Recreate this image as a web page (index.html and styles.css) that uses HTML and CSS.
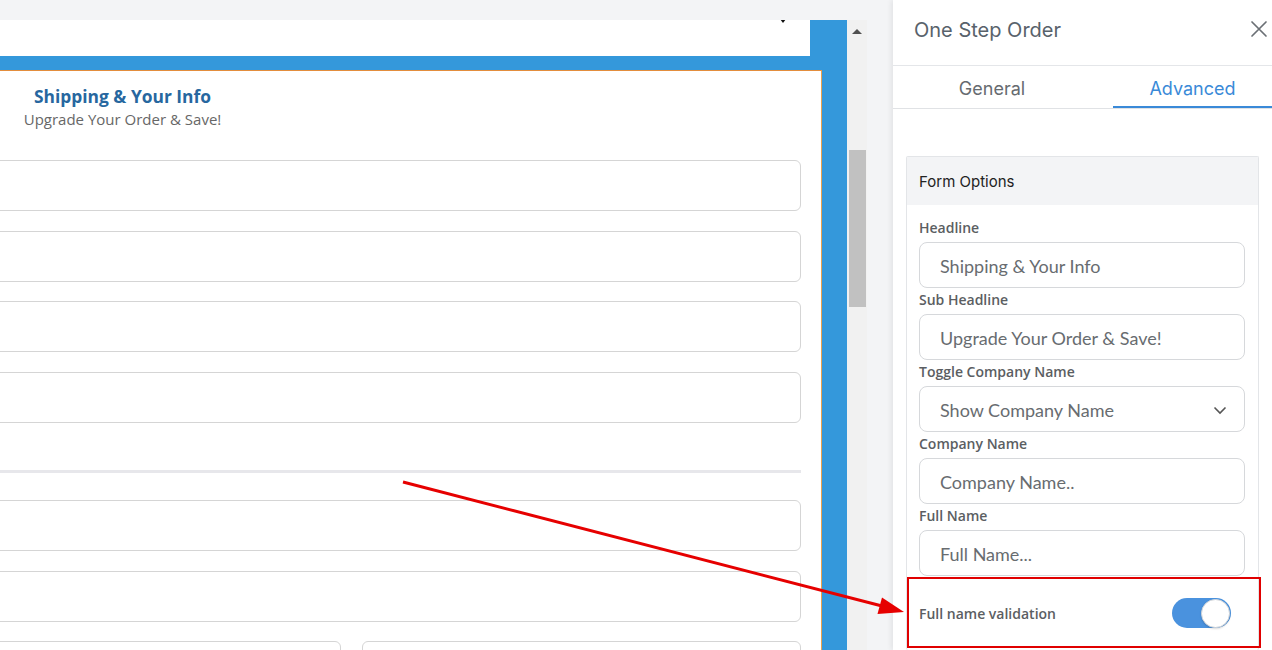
FILE: index.html
```html
<!DOCTYPE html>
<html lang="en">
<head>
<meta charset="utf-8">
<title>One Step Order</title>
<link rel="stylesheet" href="styles.css">
</head>
<body>
<div class="app">
  <main class="canvas">
    <div class="editor">
      <div class="select-top"><span class="caret"></span></div>
      <div class="form-card">
        <div class="form-head">
          <div class="fh-title">Shipping &amp; Your Info</div>
          <div class="fh-sub">Upgrade Your Order &amp; Save!</div>
        </div>
        <div class="fields">
          <div class="box"></div>
          <div class="box"></div>
          <div class="box"></div>
          <div class="box"></div>
        </div>
        <div class="divider"></div>
        <div class="fields fields-b">
          <div class="box"></div>
          <div class="box"></div>
          <div class="half-row">
            <div class="box"></div>
            <div class="box"></div>
          </div>
        </div>
      </div>
    </div>
    <div class="scrollbar">
      <span class="sb-up"></span>
      <div class="sb-thumb"></div>
    </div>
  </main>

  <aside class="panel">
    <header class="panel-head">
      <h1 class="panel-title">One Step Order</h1>
      <svg class="close" width="18" height="18" viewBox="0 0 18 18"><path d="M2 2L16 16M16 2L2 16" stroke="#6b7075" stroke-width="1.7" fill="none" stroke-linecap="round"/></svg>
    </header>
    <nav class="tabs">
      <div class="tab">General</div>
      <div class="tab active">Advanced</div>
    </nav>
    <div class="panel-body">
      <section class="opt-card">
        <div class="opt-head">Form Options</div>
        <div class="opt-body">
          <label class="lbl">Headline</label>
          <div class="inp">Shipping &amp; Your Info</div>
          <label class="lbl">Sub Headline</label>
          <div class="inp">Upgrade Your Order &amp; Save!</div>
          <label class="lbl">Toggle Company Name</label>
          <div class="inp sel">Show Company Name
            <svg class="chev" width="14" height="9" viewBox="0 0 14 9"><path d="M1.5 1.5L7 7L12.5 1.5" stroke="#555" stroke-width="1.6" fill="none"/></svg>
          </div>
          <label class="lbl">Company Name</label>
          <div class="inp">Company Name..</div>
          <label class="lbl">Full Name</label>
          <div class="inp">Full Name...</div>
          <div class="toggle-row">
            <span class="lbl">Full name validation</span>
            <span class="switch"><span class="knob"></span></span>
          </div>
        </div>
      </section>
    </div>
  </aside>
</div>

<svg class="annot" width="1272" height="650" viewBox="0 0 1272 650">
  <line x1="403" y1="482" x2="882" y2="606" stroke="#e60000" stroke-width="3"/>
  <polygon points="904,612 877.5,614 882,597.5" fill="#e60000"/>
  <rect x="908" y="578" width="352" height="69" fill="none" stroke="#e00000" stroke-width="2"/>
</svg>
</body>
</html>
```

FILE: styles.css
```css
* { box-sizing: border-box; }

html, body {
  margin: 0;
  padding: 0;
}

body {
  width: 1272px;
  height: 650px;
  overflow: hidden;
  background: #f3f4f6;
  font-family: "Open Sans", "Liberation Sans", sans-serif;
  position: relative;
}

.app {
  display: flex;
  height: 650px;
}

/* ---------- left canvas ---------- */
.canvas {
  display: flex;
  width: 867px;
  flex: none;
}

.editor {
  width: 847px;
  height: 630px;
  margin-top: 20px;
  background: #3498db;
  overflow: hidden;
}

.select-top {
  position: relative;
  width: 810px;
  height: 36px;
  background: #fff;
}

.caret {
  position: absolute;
  left: 780px;
  top: -1px;
  width: 0;
  height: 0;
  border-left: 3.5px solid transparent;
  border-right: 3.5px solid transparent;
  border-top: 4px solid #111;
}

.form-card {
  width: 822px;
  height: 600px;
  margin-top: 14px;
  background: #fff;
  border-top: 1px solid #e38d3d;
  border-right: 1px solid #eaa24f;
  overflow: hidden;
}

.form-head {
  width: 245px;
  padding-top: 13px;
  text-align: center;
}

.fh-title {
  font-size: 17.4px;
  line-height: 24px;
  font-weight: 700;
  color: #27679f;
}

.fh-sub {
  font-size: 15px;
  line-height: 22px;
  color: #676767;
}

.fields {
  display: flex;
  flex-direction: column;
  gap: 19.67px;
  margin-top: 30px;
  margin-left: -30px;
  width: 831px;
}

.fields-b {
  margin-top: 27px;
}

.box {
  height: 51px;
  border: 1px solid #d5d5d5;
  border-radius: 6px;
  background: #fff;
}

.divider {
  width: 801px;
  height: 3px;
  margin-top: 47px;
  background: #e7e7eb;
}

.half-row {
  display: grid;
  grid-template-columns: 371px 1fr;
  gap: 21px;
}

.scrollbar {
  width: 20px;
  height: 630px;
  margin-top: 20px;
  background: #f1f1f1;
  display: flex;
  flex-direction: column;
  align-items: center;
  padding-top: 9px;
}

.sb-up {
  width: 0;
  height: 0;
  border-left: 5px solid transparent;
  border-right: 5px solid transparent;
  border-bottom: 5px solid #505050;
}

.sb-thumb {
  width: 17px;
  height: 157px;
  margin-top: 116px;
  margin-left: 1px;
  background: #c1c1c1;
}

/* ---------- right panel ---------- */
.panel {
  width: 379px;
  margin-left: 26px;
  height: 650px;
  background: #fff;
  box-shadow: -2px 0 5px rgba(0, 0, 0, 0.07);
  overflow: hidden;
  font-family: Inter, "Noto Sans", sans-serif;
}

.panel-head {
  height: 66px;
  border-bottom: 1px solid #e4e6e9;
  display: flex;
  justify-content: space-between;
  align-items: flex-start;
  padding: 16px 4px 0 21px;
}

.panel-title {
  margin: 0;
  font-size: 20px;
  line-height: 28px;
  font-weight: 400;
  color: #58626b;
}

.close {
  margin-top: 4px;
}

.tabs {
  display: flex;
  height: 43px;
  border-bottom: 1px solid #e0e2e5;
}

.tab {
  height: 42px;
  padding-top: 11px;
  font-size: 18px;
  line-height: 24px;
  text-align: center;
  color: #666b70;
}

.tab:first-child {
  width: 198px;
  margin-right: 22px;
}

.tab.active {
  flex: 1;
  color: #3a8ad8;
  box-shadow: inset 0 -2px 0 #3a8ad8;
}

.panel-body {
  padding: 47px 13px 0 13px;
}

.opt-card {
  border: 1px solid #e3e5e8;
  border-bottom: none;
  border-radius: 2px;
}

.opt-head {
  height: 48px;
  background: #f3f4f6;
  padding: 1px 0 0 12px;
  font-size: 15px;
  line-height: 48px;
  color: #222;
}

.opt-body {
  padding: 11px 13px 0 12px;
  display: flex;
  flex-direction: column;
}

.lbl {
  display: block;
  font-family: "Open Sans", "Liberation Sans", sans-serif;
  font-size: 14px;
  font-weight: 600;
  line-height: 22px;
  padding-top: 1px;
  height: 22px;
  color: #5b5e62;
  margin-bottom: 4px;
}

.inp {
  height: 46px;
  border: 1px solid #d6d8db;
  border-radius: 8px;
  padding: 2px 0 0 20px;
  display: flex;
  align-items: center;
  font-family: Lato, "Liberation Sans", sans-serif;
  font-size: 18px;
  color: #686c70;
}

.sel {
  justify-content: space-between;
  padding-right: 17px;
}

.chev {
  flex: none;
}

.toggle-row {
  height: 74px;
  display: flex;
  align-items: center;
  justify-content: space-between;
  padding-right: 14px;
}

.toggle-row .lbl {
  margin-bottom: 0;
}

.switch {
  position: relative;
  width: 59px;
  height: 30px;
  border-radius: 15px;
  background: #4a92de;
  display: flex;
  justify-content: flex-end;
  align-items: center;
  padding-right: 1px;
}

.knob {
  width: 29px;
  height: 29px;
  border-radius: 50%;
  background: #fff;
  border: 1px solid #d3d6da;
  box-shadow: 0 1px 2px rgba(0, 0, 0, 0.15);
}

/* ---------- annotation overlay ---------- */
.annot {
  position: absolute;
  left: 0;
  top: 0;
  pointer-events: none;
}
```
